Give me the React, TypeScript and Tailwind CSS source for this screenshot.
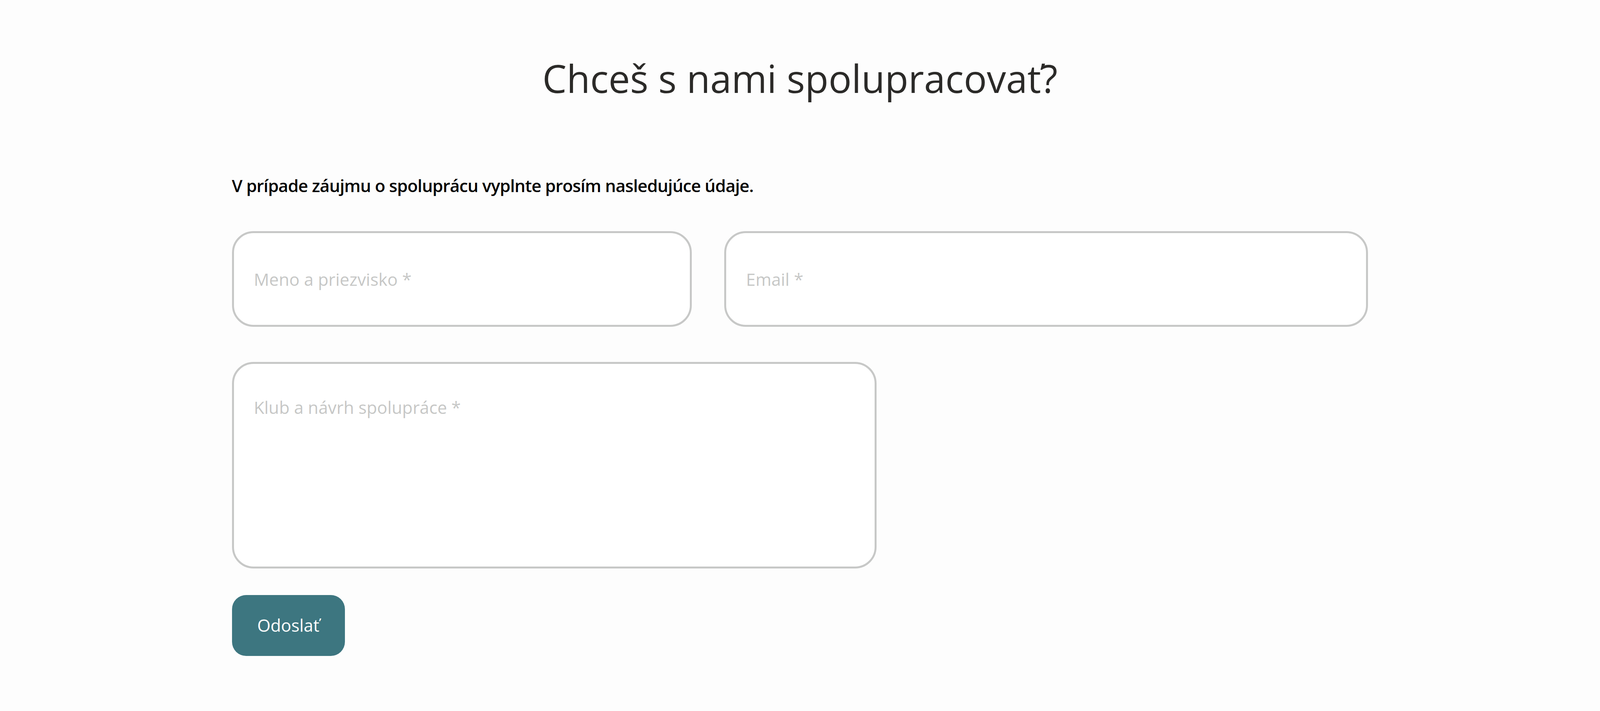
const field =
  "block w-full rounded-[55px] border-[5px] border-[#c7c8c7] bg-white px-[1.25vw] text-[1.07vw] text-[#2b2a28] outline-none placeholder:text-[#c6c7c6]";

export default function App() {
  return (
    <div className="min-h-[1821px] w-full bg-[#fdfdfd] font-['Open_Sans',sans-serif]">
      <div className="mx-auto w-[71.02vw] pt-[100px]">
        <h1 className="text-center text-[2.4vw] leading-[200px] font-normal text-[#2b2a28]">
          Chceš s nami spolupracovať?
        </h1>
        <p className="mt-[130px] text-[1.07vw] leading-[90px] font-semibold tracking-[-0.02em] text-black">
          V prípade záujmu o spoluprácu vyplnte prosím nasledujúce údaje.
        </p>
        <form className="mt-[72px]" onSubmit={(e) => e.preventDefault()}>
          <div className="grid grid-cols-[5fr_7fr] gap-x-[2.01vw]">
            <input type="text" placeholder="Meno a priezvisko *" className={`${field} h-[245px]`} />
            <input type="email" placeholder="Email *" className={`${field} h-[245px]`} />
          </div>
          <textarea
            placeholder="Klub a návrh spolupráce *"
            className={`${field} mt-[90px] h-[529px] !w-[40.3vw] resize-none pt-[66px] leading-[90px]`}
          />
          <button
            type="submit"
            className="mt-[68px] block h-[156px] w-[7.056vw] rounded-[36px] bg-[#3d7680] text-center text-[1.07vw] font-medium text-white"
          >
            Odoslať
          </button>
        </form>
      </div>
    </div>
  );
}
